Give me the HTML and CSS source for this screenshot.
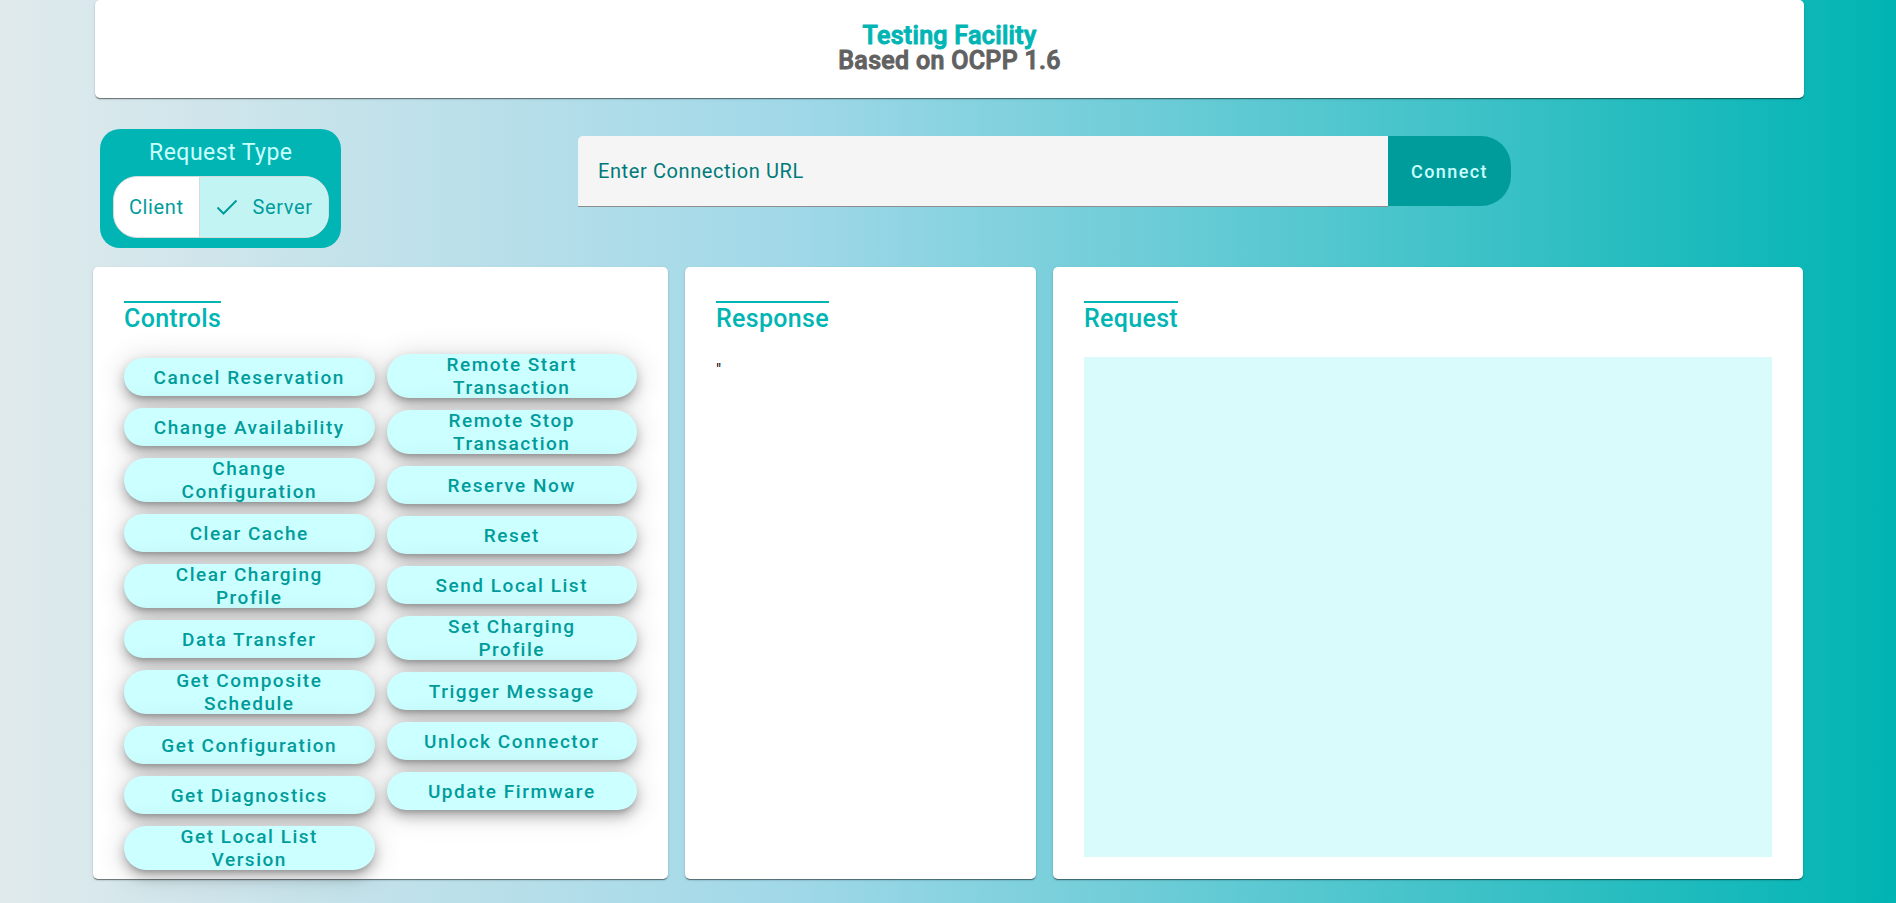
FILE: index.html
```html
<!DOCTYPE html>
<html lang="en">
<head>
<meta charset="utf-8">
<title>Testing Facility</title>
<link rel="stylesheet" href="styles.css">
</head>
<body>
<header class="banner">
  <h1 class="banner-title"><span class="brand">Testing Facility</span><span>Based on OCPP 1.6</span></h1>
</header>
<section class="toolbar">
  <fieldset class="type-box">
    <legend class="type-title">Request Type</legend>
    <div class="toggle">
      <label class="option"><input class="option-input" type="radio" name="type" value="client">Client</label>
      <label class="option"><input class="option-input" type="radio" name="type" value="server" checked><svg class="tick" viewBox="0 0 24 24" aria-hidden="true"><path d="M2.500 12.500 8.500 18.500 21.500 5.500" fill="none" stroke="currentColor" stroke-width="2"/></svg>Server</label>
    </div>
  </fieldset>
  <form class="connect-form">
    <input class="url" type="text" aria-label="Enter Connection URL" placeholder="Enter Connection URL">
    <button class="connect" type="button">Connect</button>
  </form>
</section>
<main class="panels">
  <section class="panel">
    <h2 class="panel-title">Controls</h2>
    <div class="controls">
      <div class="column">
        <button class="action" type="button">Cancel Reservation</button>
        <button class="action" type="button">Change Availability</button>
        <button class="action" type="button">Change Configuration</button>
        <button class="action" type="button">Clear Cache</button>
        <button class="action" type="button">Clear Charging Profile</button>
        <button class="action" type="button">Data Transfer</button>
        <button class="action" type="button">Get Composite Schedule</button>
        <button class="action" type="button">Get Configuration</button>
        <button class="action" type="button">Get Diagnostics</button>
        <button class="action" type="button">Get Local List Version</button>
      </div>
      <div class="column">
        <button class="action" type="button">Remote Start Transaction</button>
        <button class="action" type="button">Remote Stop Transaction</button>
        <button class="action" type="button">Reserve Now</button>
        <button class="action" type="button">Reset</button>
        <button class="action" type="button">Send Local List</button>
        <button class="action" type="button">Set Charging Profile</button>
        <button class="action" type="button">Trigger Message</button>
        <button class="action" type="button">Unlock Connector</button>
        <button class="action" type="button">Update Firmware</button>
      </div>
    </div>
  </section>
  <section class="panel">
    <h2 class="panel-title">Response</h2>
    <pre class="response">"</pre>
  </section>
  <section class="panel">
    <h2 class="panel-title" id="request-title">Request</h2>
    <textarea class="request" aria-labelledby="request-title"></textarea>
  </section>
</main>
</body>
</html>
```
FILE: styles.css
```css
* { box-sizing: border-box; }

body {
  margin: 0;
  min-height: 100vh;
  font-family: Roboto, "Liberation Sans", sans-serif;
  background: linear-gradient(to right, #e0eaec, #a0d8e8 42%, #00b4b3);
}

button, input, textarea { font-family: inherit; }

.banner, .panel {
  background: #fff;
  border-radius: 5px;
  box-shadow: 0 2px 1px -1px rgba(0, 0, 0, .3), 0 1px 1px rgba(0, 0, 0, .24), 0 1px 3px rgba(0, 0, 0, .12);
}

.banner {
  margin: 0 92px 0 95px;
  padding: 23px 16px 25px;
}

.banner-title {
  display: flex;
  flex-direction: column;
  margin: 0;
  font-size: 25px;
  line-height: 25px;
  font-weight: 500;
  letter-spacing: 0.0125em;
  text-align: center;
  color: #616161;
  -webkit-text-stroke: 1px currentColor;
}

.brand { color: #00b5b4; }

.toolbar {
  display: flex;
  align-items: flex-start;
  justify-content: space-between;
  margin: 31px 385px 19px 100px;
}

.type-box {
  width: 240px;
  margin: 0;
  padding: 12px 12px 10px 13px;
  border: 0;
  border-radius: 20px;
  background: #00b5b4;
}

.type-title {
  float: left;
  width: 100%;
  padding: 0;
  margin-bottom: 11px;
  font-size: 23px;
  line-height: 24px;
  letter-spacing: 0.02em;
  text-align: center;
  color: #cff;
}

.toggle {
  clear: both;
  display: flex;
  height: 62px;
  border: 1px solid #d5dcdc;
  border-radius: 24px;
  overflow: hidden;
  background: #fff;
}

.option {
  display: flex;
  align-items: center;
  justify-content: center;
  padding: 0 15px;
  font-size: 20px;
  letter-spacing: 0.03em;
  color: #009c9b;
}

.option + .option {
  flex: 1;
  border-left: 1px solid #d5dcdc;
}

.option:has(:checked) { background: #c2f4f4; }

.option-input {
  position: absolute;
  opacity: 0;
}

.tick {
  width: 24px;
  height: 24px;
  margin-right: 14px;
}

.connect-form {
  display: flex;
  width: 933px;
  margin-top: 7px;
}

.url {
  flex: 1;
  min-width: 0;
  height: 71px;
  padding: 0 20px;
  border: 0;
  border-bottom: 1px solid #8e8e8e;
  border-radius: 5px 0 0 0;
  background: #f5f5f5;
  font-size: 20px;
  letter-spacing: 0.03em;
}

.url::placeholder { color: #007a79; }

.connect {
  width: 123px;
  height: 70px;
  border: 0;
  border-radius: 0 30px 30px 0;
  background: #009c9b;
  color: #cff;
  font-size: 18px;
  font-weight: 500;
  letter-spacing: 0.08em;
}

.panels {
  display: grid;
  grid-template-columns: 575fr 351fr 750fr;
  gap: 17px;
  margin: 0 93px 24px;
}

.panel {
  display: flex;
  flex-direction: column;
  align-items: flex-start;
  min-width: 0;
  padding: 34px 31px 9px;
}

.panel-title {
  margin: 0;
  border-top: 2px solid #00b5b4;
  font-size: 25px;
  line-height: 32px;
  font-weight: 500;
  letter-spacing: 0.0125em;
  color: #00b5b4;
}

.controls {
  display: flex;
  gap: 12px;
  width: 100%;
  margin-top: 19px;
}

.column {
  display: flex;
  flex: 1;
  flex-direction: column;
  gap: 12px;
}

.column:first-child { padding-top: 4px; }

.action {
  display: flex;
  align-items: center;
  justify-content: center;
  min-height: 38px;
  max-height: 44px;
  padding: 0 28px;
  border: 0;
  border-radius: 22px;
  background: #cff;
  box-shadow: 0 5px 5px -3px rgba(0, 0, 0, .2), 0 6px 12px 1px rgba(0, 0, 0, .22), 0 3px 28px 4px rgba(0, 0, 0, .12);
  color: #009c9b;
  font-size: 19px;
  line-height: 23px;
  font-weight: 500;
  letter-spacing: 0.08em;
}

.response {
  margin: 25px 0 0;
  font-family: inherit;
  font-size: 16px;
  line-height: 20px;
}

.request {
  flex: 1;
  width: 100%;
  margin: 22px 0 13px;
  border: 0;
  resize: none;
  background: #d9fbfc;
  font-size: 16px;
}
```
